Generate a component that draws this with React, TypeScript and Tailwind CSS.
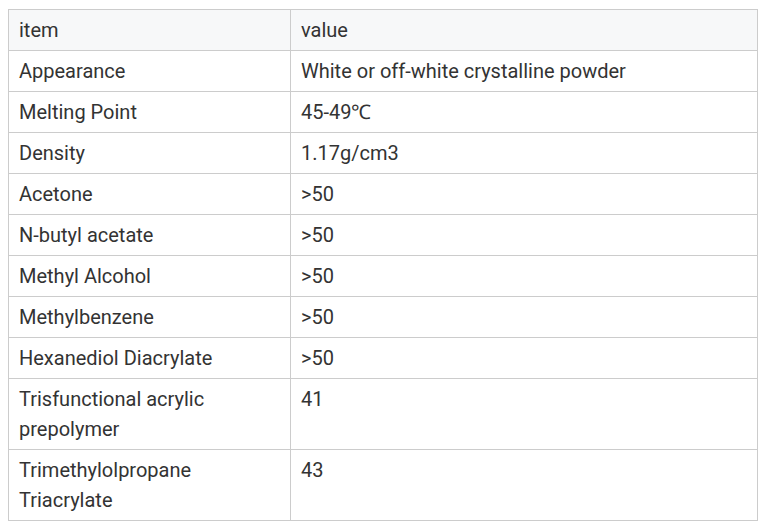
const rows: [string, string][] = [
  ["Appearance", "White or off-white crystalline powder"],
  ["Melting Point", "45-49℃"],
  ["Density", "1.17g/cm3"],
  ["Acetone", ">50"],
  ["N-butyl acetate", ">50"],
  ["Methyl Alcohol", ">50"],
  ["Methylbenzene", ">50"],
  ["Hexanediol Diacrylate", ">50"],
  ["Trisfunctional acrylic prepolymer", "41"],
  ["Trimethylolpropane Triacrylate", "43"],
];

export default function App() {
  return (
    <div className="bg-white pl-[8px] pt-[9px] font-['Roboto',sans-serif] text-[20px] leading-[30px] text-[#333]">
      <table className="w-[750px] table-fixed border-collapse">
        <colgroup>
          <col className="w-[282px]" />
          <col />
        </colgroup>
        <thead>
          <tr className="bg-[#f7f8f9]">
            <th className="border border-[#cccccc] px-[10px] py-[5px] text-left font-normal align-top">item</th>
            <th className="border border-[#cccccc] px-[10px] py-[5px] text-left font-normal align-top">value</th>
          </tr>
        </thead>
        <tbody>
          {rows.map(([k, v]) => (
            <tr key={k}>
              <td className="border border-[#cccccc] px-[10px] py-[5px] align-top">{k}</td>
              <td className="border border-[#cccccc] px-[10px] py-[5px] align-top">{v}</td>
            </tr>
          ))}
        </tbody>
      </table>
    </div>
  );
}
